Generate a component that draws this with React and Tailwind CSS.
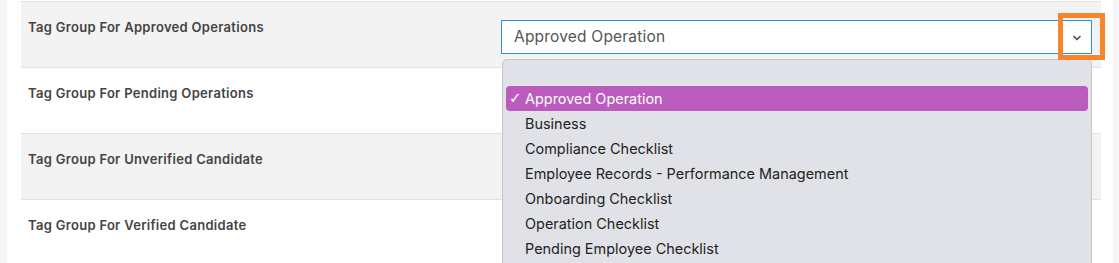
import { ChevronDown } from "lucide-react";

const labels = [
  "Tag Group For Approved Operations",
  "Tag Group For Pending Operations",
  "Tag Group For Unverified Candidate",
  "Tag Group For Verified Candidate",
];

const options = [
  "Approved Operation",
  "Business",
  "Compliance Checklist",
  "Employee Records - Performance Management",
  "Onboarding Checklist",
  "Operation Checklist",
  "Pending Employee Checklist",
];

export default function App() {
  return (
    <div className="relative h-[263px] w-[1119px] overflow-hidden bg-[#f4f5f7] pl-[7px] pr-[6px]">
      <div className="h-full bg-white pl-[14px] pr-[12px] pt-px">
        {labels.map((label, i) => (
          <div
            key={label}
            className={
              "flex h-[66px] border-t border-[#e3e3e3] " +
              (i % 2 === 0 ? "bg-[#f3f3f3]" : "bg-white")
            }
          >
            <div className="w-[480px] pl-[7px] pt-[16px] font-['Inter',sans-serif] text-[13px] leading-[18px] font-semibold tracking-[0.3px] text-[#444]">
              {label}
            </div>
            {i === 0 && (
              <div className="mt-[18px] flex h-[34px] w-[591px] items-center justify-between border border-[#2b8fe3] bg-white pl-[12px] pr-[8px]">
                <span className="font-['Inter',sans-serif] text-[15.5px] tracking-[0.2px] text-[#555]">
                  Approved Operation
                </span>
                <ChevronDown className="mt-[2px] h-[12px] w-[12px] text-[#555]" strokeWidth={3.5} />
              </div>
            )}
          </div>
        ))}
      </div>

      {/* open dropdown */}
      <div className="absolute left-[502px] top-[59px] h-[220px] w-[590px] rounded-t-[5px] border border-[#c4c4c6] bg-[#e1e2e7] px-[3px] pt-[26px] font-['Inter',sans-serif] text-[14.45px] text-[#222]">
        {options.map((opt, i) => (
          <div
            key={opt}
            className={
              "relative flex h-[25px] items-center pl-[19px] " +
              (i === 0 ? "rounded-[4px] bg-[#bb5bbd] text-white" : "")
            }
          >
            {i === 0 && (
              <span className="absolute left-[3px] font-['DejaVu_Sans',sans-serif] text-[15px] font-bold">
                ✓
              </span>
            )}
            {opt}
          </div>
        ))}
      </div>

      {/* highlight box */}
      <div className="absolute left-[1058px] top-[13px] h-[47px] w-[47px] border-[5px] border-[#f5862e]" />
    </div>
  );
}
